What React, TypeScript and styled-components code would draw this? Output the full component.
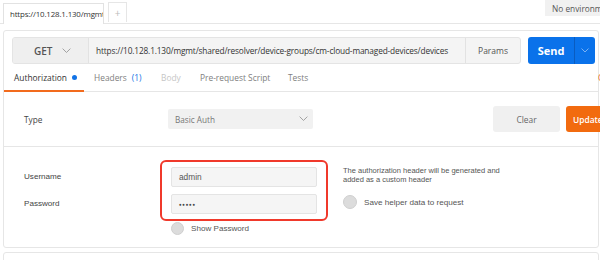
import React from "react";
import styled, { createGlobalStyle } from "styled-components";

const Global = createGlobalStyle`
  html, body { margin: 0; padding: 0; background: #fff; }
  body { width: 600px; height: 260px; overflow: hidden; font-family: "Open Sans", "Liberation Sans", sans-serif; color: #505050; }
  * { box-sizing: border-box; }
`;

const Page = styled.div`
  width: 600px;
  height: 260px;
  overflow: hidden;
`;

const TopBar = styled.div`
  height: 24px;
  display: flex;
  align-items: flex-end;
  padding-left: 3px;
  border-bottom: 1px solid #e6e6e6;
`;

const DocTab = styled.div`
  width: 101px;
  height: 21px;
  margin-bottom: -1px;
  background: #fff;
  border: 1px solid #e2e2e2;
  border-bottom: none;
  font-size: 7.9px;
  letter-spacing: -0.15px;
  color: #333;
  display: flex;
  align-items: center;
  padding-left: 6px;
  white-space: nowrap;
  overflow: hidden;
`;

const AddTab = styled.div`
  width: 19px;
  height: 20px;
  margin-left: 4px;
  margin-bottom: 1px;
  border: 1px solid #e6e6e6;
  border-bottom: none;
  color: #bbb;
  font-size: 10px;
  display: flex;
  align-items: center;
  justify-content: center;
`;

const EnvSelect = styled.div`
  margin-left: auto;
  align-self: flex-start;
  width: 62px;
  margin-right: -7px;
  height: 16px;
  background: #f1f1f1;
  font-size: 8.3px;
  color: #555;
  padding-left: 7px;
  display: flex;
  align-items: center;
  white-space: nowrap;
  overflow: hidden;
`;

const Card = styled.div`
  margin: 6px 1px 0 3px;
  border: 1px solid #e6e6e6;
  border-radius: 3px;
`;

const RequestRow = styled.div`
  display: flex;
  padding: 6px 3px 0 8px;
  height: 33px;
`;

const UrlGroup = styled.div`
  flex: 1;
  display: flex;
  height: 27px;
  border: 1px solid #e4e4e4;
  border-radius: 3px;
  background: #f4f4f4;
  overflow: hidden;
`;

const Method = styled.div`
  width: 76px;
  flex-shrink: 0;
  display: flex;
  align-items: center;
  padding-left: 21px;
  gap: 9px;
  font-size: 10px;
  font-weight: 600;
  color: #555;
  background: #efefef;
  border-right: 1px solid #e2e2e2;
`;

const Url = styled.div`
  flex: 1;
  display: flex;
  align-items: center;
  padding-left: 7px;
  font-size: 8.3px;
  letter-spacing: -0.15px;
  color: #333;
  white-space: nowrap;
  overflow: hidden;
`;

const Params = styled.div`
  width: 55px;
  flex-shrink: 0;
  border-left: 1px solid #e2e2e2;
  display: flex;
  align-items: center;
  justify-content: center;
  font-size: 8.5px;
  color: #555;
`;

const SendGroup = styled.div`
  margin-left: 7px;
  width: 67px;
  height: 27px;
  display: flex;
  border-radius: 3px;
  background: #0a72ea;
  overflow: hidden;
`;

const SendLabel = styled.div`
  flex: 1;
  display: flex;
  align-items: center;
  justify-content: center;
  color: #fff;
  font-size: 11px;
  font-weight: 700;
`;

const SendCaret = styled.div`
  width: 21px;
  border-left: 1px solid #0a5cc0;
  display: flex;
  align-items: center;
  justify-content: center;
`;

const TabsRow = styled.div`
  display: flex;
  align-items: stretch;
  height: 28px;
  border-bottom: 1px solid #e6e6e6;
`;

const Tab = styled.div<{ $active?: boolean; $muted?: boolean; $w: number }>`
  width: ${(p) => p.$w}px;
  flex-shrink: 0;
  display: flex;
  align-items: center;
  padding-left: 10px;
  gap: 5px;
  font-size: 8.4px;
  color: ${(p) => (p.$active ? "#333" : p.$muted ? "#c6c6c6" : "#808080")};
  border-bottom: 2px solid ${(p) => (p.$active ? "#f26b1d" : "transparent")};
  margin-bottom: -1px;
  white-space: nowrap;
`;

const Dot = styled.span`
  width: 5px;
  height: 5px;
  border-radius: 50%;
  background: #1273e6;
  display: inline-block;
`;

const Count = styled.span`
  color: #1273e6;
`;

const SideLink = styled.div`
  margin-left: auto;
  margin-right: -40px;
  width: 40px;
  display: flex;
  align-items: center;
  font-size: 8.4px;
  color: #f26b1d;
  white-space: nowrap;
`;

const TypeRow = styled.div`
  display: flex;
  align-items: center;
  height: 55px;
  padding-left: 20px;
  border-bottom: 1px solid #e6e6e6;
`;

const Label = styled.div`
  width: 144px;
  flex-shrink: 0;
  font-size: 8.3px;
  color: #444;
`;

const Select = styled.div`
  width: 145px;
  height: 20px;
  background: #f1f1f1;
  border-radius: 2px;
  display: flex;
  align-items: center;
  justify-content: space-between;
  padding: 0 5px 0 7px;
  font-size: 8.2px;
  color: #777;
`;

const Spacer = styled.div`
  flex: 1;
`;

const Button = styled.div<{ $primary?: boolean; $w: number }>`
  width: ${(p) => p.$w}px;
  flex-shrink: 0;
  height: 26px;
  border-radius: 3px;
  background: ${(p) => (p.$primary ? "#f26b0f" : "#f0f0f0")};
  color: ${(p) => (p.$primary ? "#fff" : "#666")};
  font-size: 8.4px;
  font-weight: ${(p) => (p.$primary ? 600 : 400)};
  white-space: nowrap;
  overflow: hidden;
  display: flex;
  align-items: center;
  justify-content: ${(p) => (p.$primary ? "flex-start" : "center")};
  padding-left: ${(p) => (p.$primary ? "7px" : "0")};
  margin-left: ${(p) => (p.$primary ? "6px" : "0")};
  margin-right: ${(p) => (p.$primary ? "-40px" : "0")};
`;

const CredSection = styled.div`
  display: flex;
  padding: 13px 0 12px 20px;
`;

const LabelCol = styled.div`
  width: 136px;
  flex-shrink: 0;
  padding-top: 7px;
  display: flex;
  flex-direction: column;
  gap: 7px;
`;

const CredLabel = styled.div`
  height: 20px;
  line-height: 20px;
  font-family: "Liberation Sans", Arial, sans-serif;
  font-size: 8.1px;
  color: #444;
`;

const FieldCol = styled.div`
  width: 168px;
  flex-shrink: 0;
  display: flex;
  flex-direction: column;
`;

const Highlight = styled.div`
  border: 2px solid #f0392b;
  border-radius: 6px;
  padding: 5px 9px;
  display: flex;
  flex-direction: column;
  gap: 7px;
`;

const Input = styled.div`
  height: 20px;
  background: #f5f5f5;
  border: 1px solid #e4e4e4;
  border-radius: 2px;
  display: flex;
  align-items: center;
  padding-left: 7px;
  font-family: "Liberation Sans", Arial, sans-serif;
  font-size: 8.3px;
  color: #555;
`;

const Dots = styled.span`
  font-size: 4.6px;
  letter-spacing: 0.6px;
  color: #444;
`;

const RadioRow = styled.div<{ $indent?: number }>`
  display: flex;
  align-items: center;
  gap: 7px;
  padding-left: ${(p) => p.$indent || 0}px;
  font-family: "Liberation Sans", Arial, sans-serif;
  font-size: 8.1px;
  color: #555;
`;

const Radio = styled.span<{ $size: number }>`
  width: ${(p) => p.$size}px;
  height: ${(p) => p.$size}px;
  border-radius: 50%;
  background: #dcdcdc;
  border: 1px solid #cfcfcf;
  flex-shrink: 0;
`;

const NoteCol = styled.div`
  margin-left: 15px;
  padding-top: 6px;
  display: flex;
  flex-direction: column;
`;

const Note = styled.div`
  font-family: "Liberation Sans", Arial, sans-serif;
  font-size: 7.5px;
  line-height: 9px;
  color: #555;
  width: 170px;
  margin-bottom: 11px;
`;

const NextCard = styled.div`
  margin: 4px 1px 0 3px;
  height: 30px;
  border: 1px solid #e6e6e6;
  border-radius: 3px;
`;

const Chevron = ({ color, size = 9 }: { color: string; size?: number }) => (
  <svg width={size} height={size * 0.6} viewBox="0 0 10 6" fill="none">
    <path d="M1 1l4 4 4-4" stroke={color} strokeWidth="1" strokeLinecap="round" strokeLinejoin="round" />
  </svg>
);

export default function App() {
  return (
    <Page>
      <Global />
      <TopBar>
        <DocTab>https://10.128.1.130/mgmt/</DocTab>
        <AddTab>+</AddTab>
        <EnvSelect>No environment</EnvSelect>
      </TopBar>
      <Card>
        <RequestRow>
          <UrlGroup>
            <Method>
              GET <Chevron color="#999" />
            </Method>
            <Url>https://10.128.1.130/mgmt/shared/resolver/device-groups/cm-cloud-managed-devices/devices</Url>
            <Params>Params</Params>
          </UrlGroup>
          <SendGroup>
            <SendLabel>Send</SendLabel>
            <SendCaret>
              <Chevron color="#9cc4f5" size={8} />
            </SendCaret>
          </SendGroup>
        </RequestRow>
        <TabsRow>
          <Tab $active $w={80}>
            Authorization <Dot />
          </Tab>
          <Tab $w={67}>
            Headers <Count>(1)</Count>
          </Tab>
          <Tab $muted $w={39}>Body</Tab>
          <Tab $w={88}>Pre-request Script</Tab>
          <Tab $w={50}>Tests</Tab>
          <SideLink>Cookies</SideLink>
        </TabsRow>
        <TypeRow>
          <Label>Type</Label>
          <Select>
            Basic Auth <Chevron color="#999" />
          </Select>
          <Spacer />
          <Button $w={67}>Clear</Button>
          <Button $primary $w={72}>Update Request</Button>
        </TypeRow>
        <CredSection>
          <LabelCol>
            <CredLabel>Username</CredLabel>
            <CredLabel>Password</CredLabel>
          </LabelCol>
          <FieldCol>
            <Highlight>
              <Input>admin</Input>
              <Input>
                <Dots>●●●●●</Dots>
              </Input>
            </Highlight>
            <RadioRow $indent={11} style={{ marginTop: 1 }}>
              <Radio $size={13} />
              Show Password
            </RadioRow>
          </FieldCol>
          <NoteCol>
            <Note>The authorization header will be generated and added as a custom header</Note>
            <RadioRow>
              <Radio $size={14} />
              Save helper data to request
            </RadioRow>
          </NoteCol>
        </CredSection>
      </Card>
      <NextCard />
    </Page>
  );
}
